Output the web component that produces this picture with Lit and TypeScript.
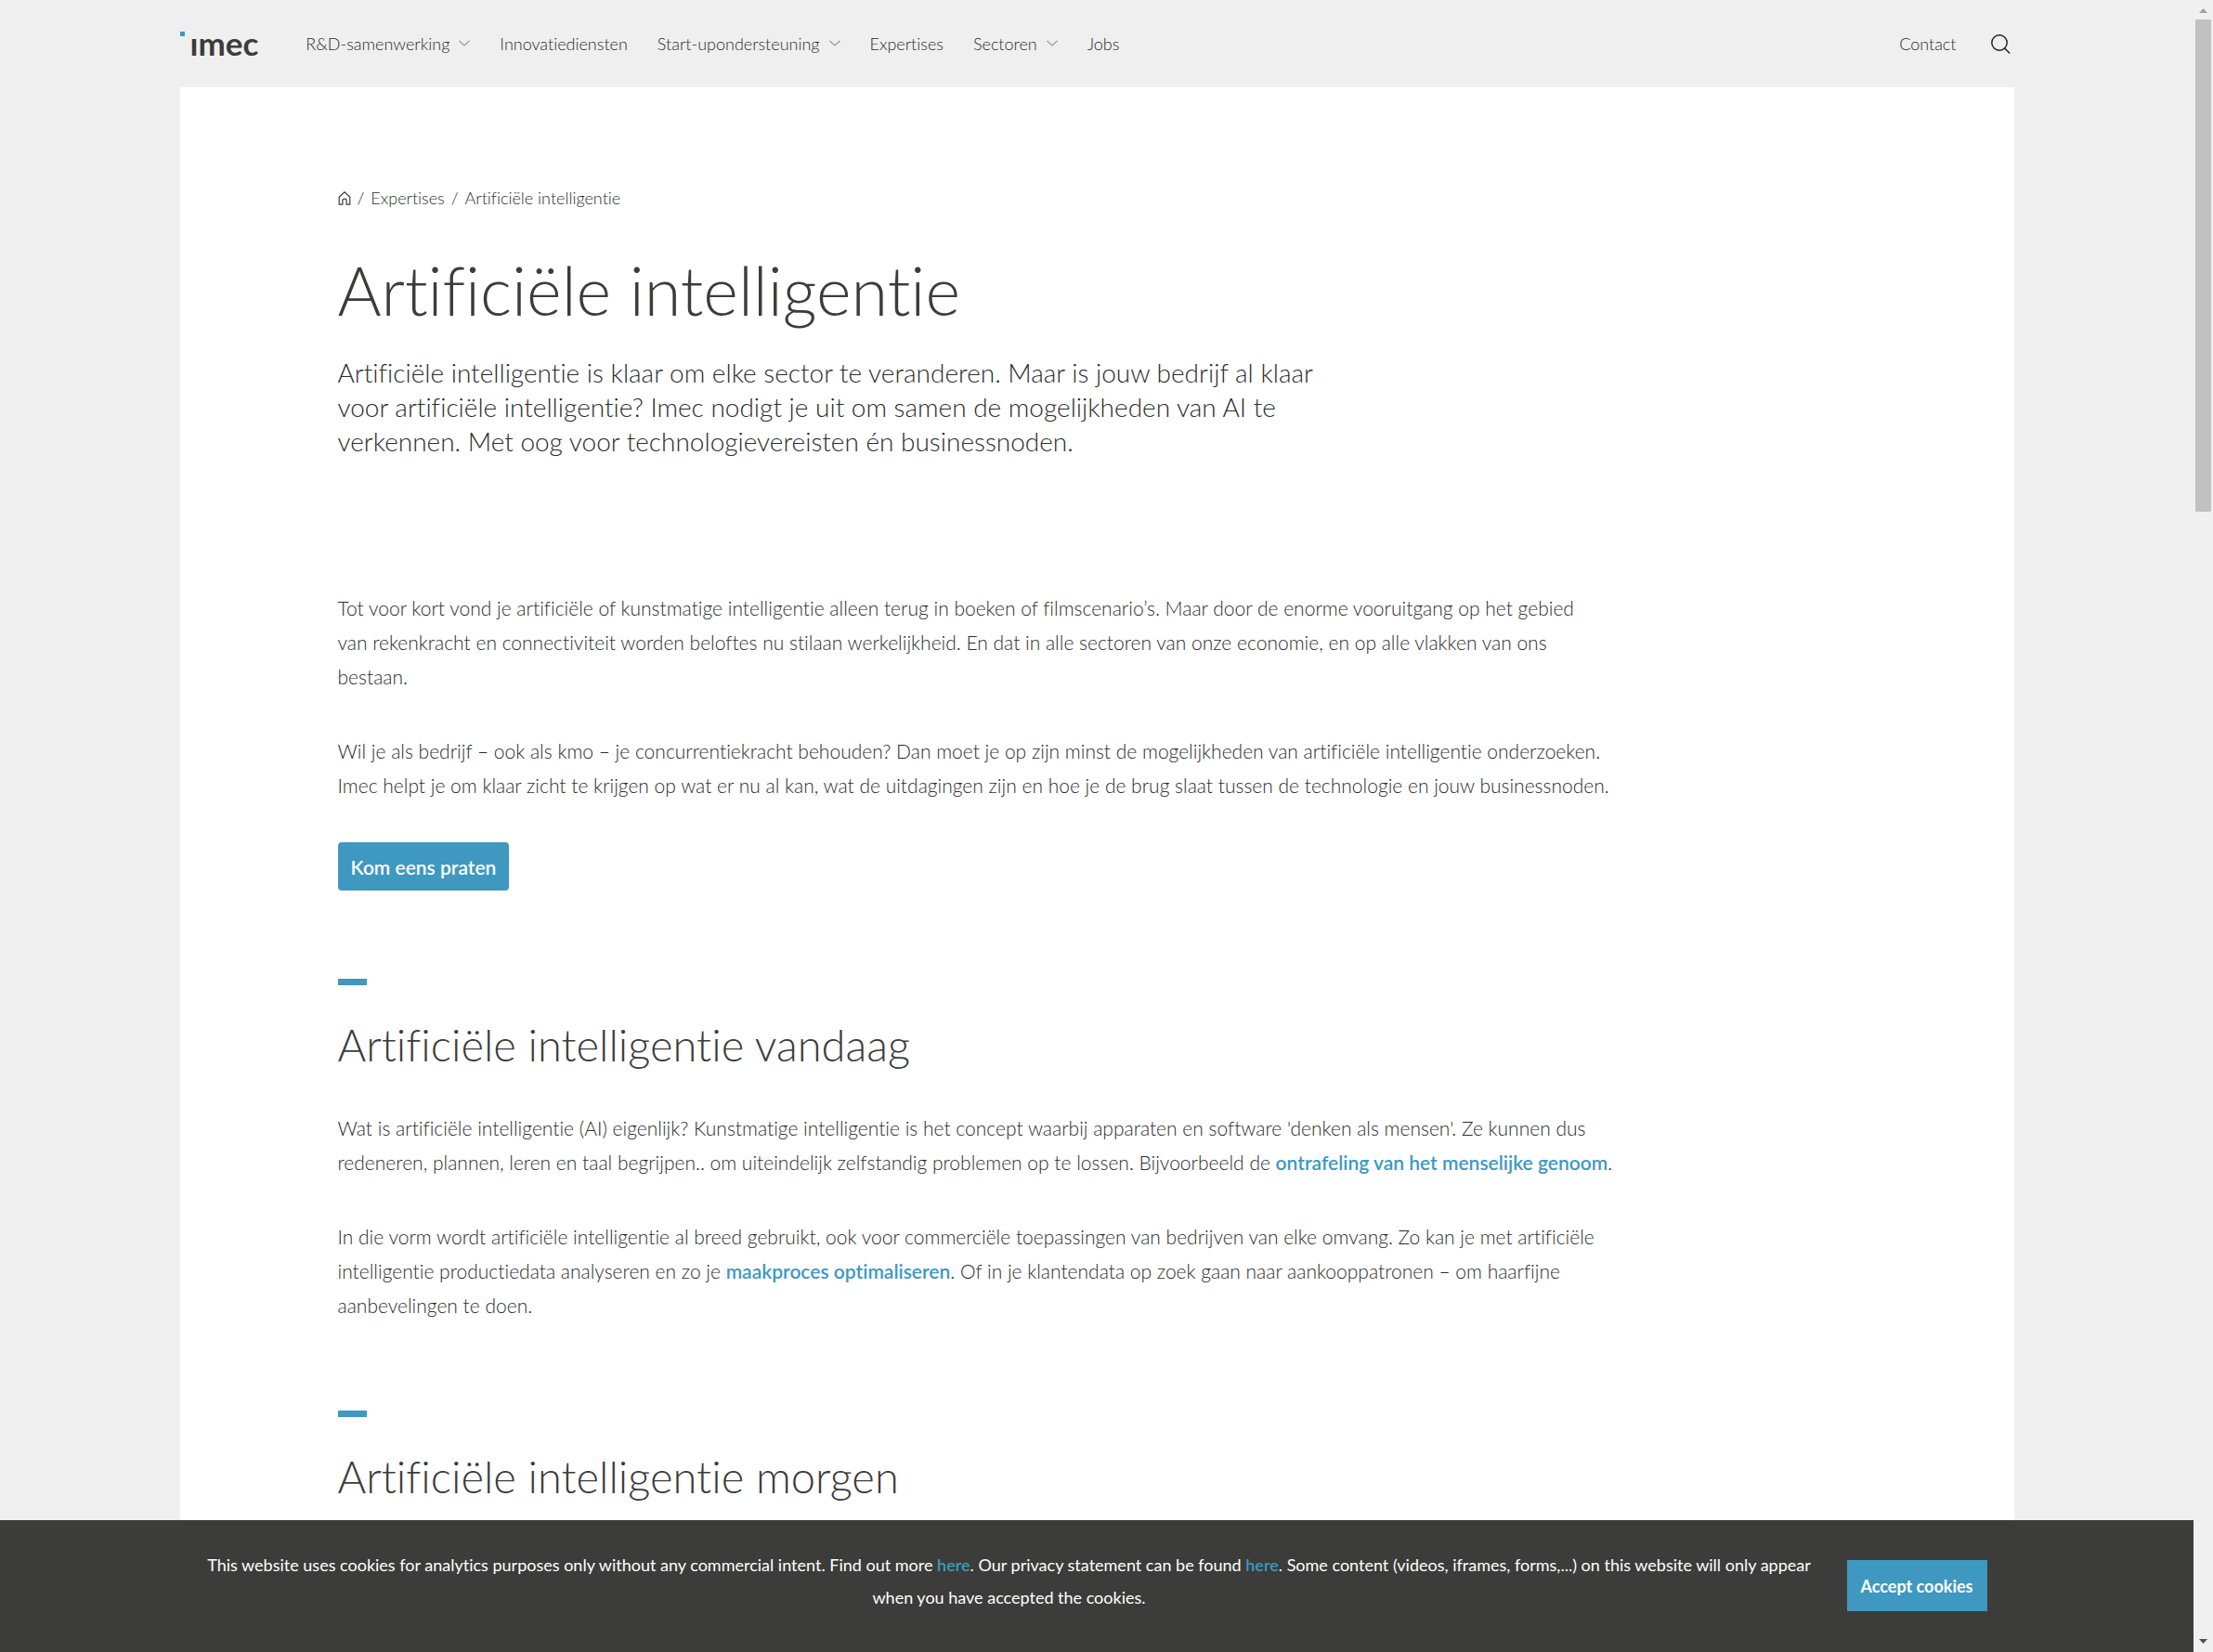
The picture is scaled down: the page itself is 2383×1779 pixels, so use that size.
import { LitElement, html, svg, css, nothing } from "lit";
import { customElement } from "lit/decorators.js";

interface NavItem {
  label: string;
  menu: boolean;
}

const NAV: NavItem[] = [
  { label: "R&D-samenwerking", menu: true },
  { label: "Innovatiediensten", menu: false },
  { label: "Start-upondersteuning", menu: true },
  { label: "Expertises", menu: false },
  { label: "Sectoren", menu: true },
  { label: "Jobs", menu: false },
];

const chevron = html`<svg class="chevron" width="12" height="8" viewBox="0 0 12 8" aria-hidden="true">
  ${svg`<path d="M0.5 1 L6 6 L11.5 1" fill="none" stroke="#9a9a9a" stroke-width="1.2" />`}
</svg>`;

@customElement("site-header")
export class SiteHeader extends LitElement {
  static styles = css`
    :host {
      display: block;
    }
    .bar {
      display: flex;
      align-items: center;
      box-sizing: border-box;
      height: 94px;
      max-width: 1975px;
      margin: 0 auto;
    }
    .logo {
      position: relative;
      padding: 0 51px 2px 11px;
      color: #3c3c3b;
      font-size: 35px;
      font-weight: 700;
      line-height: 44px;
    }
    .dot {
      position: absolute;
      left: 0;
      top: 10px;
      width: 5px;
      height: 5px;
      background: #3f98bf;
    }
    .links {
      display: flex;
      flex: 1;
      gap: 32px;
      list-style: none;
      margin: 0;
      padding: 0;
    }
    a {
      display: flex;
      align-items: center;
      gap: 10px;
      color: #2c2c2b;
      text-decoration: none;
      white-space: nowrap;
    }
    .search {
      display: flex;
      margin: 0 4px 0 37px;
      padding: 0;
      border: 0;
      background: none;
    }
  `;

  render() {
    return html`
      <header class="bar">
        <a class="logo" href="#" aria-label="imec"><span class="dot"></span>ımec</a>
        <ul class="links">
          ${NAV.map(
            (item) => html`<li><a href="#">${item.label}${item.menu ? chevron : nothing}</a></li>`
          )}
        </ul>
        <a href="#">Contact</a>
        <button class="search" type="button" aria-label="Zoeken">
          <svg width="21" height="21" viewBox="0 0 21 21" fill="none" stroke="#1d1d1b" stroke-width="1.4" aria-hidden="true">
            <circle cx="9" cy="9" r="8.2" />
            <path d="M14.2 14.6 L20.2 20.4" />
          </svg>
        </button>
      </header>
    `;
  }
}

@customElement("cookie-bar")
export class CookieBar extends LitElement {
  static styles = css`
    :host {
      display: block;
      background: #3c3c3a;
      color: #fff;
    }
    .inner {
      display: flex;
      align-items: flex-start;
      gap: 9px;
      box-sizing: border-box;
      max-width: 1975px;
      margin: 0 auto;
      padding: 31px 29px 41px 0;
    }
    .message {
      flex: 1;
      margin: 0;
      padding: 0 16px;
      font-weight: 400;
      line-height: 35px;
      text-align: center;
    }
    .message a {
      color: #3f98bf;
      font-weight: 600;
      text-decoration: none;
    }
    .accept {
      height: 55px;
      margin: 12px 0 0;
      padding: 0 15px;
      border: 0;
      background: #3f98bf;
      color: #fff;
      font: 700 18px "Lato", sans-serif;
      white-space: nowrap;
    }
  `;

  render() {
    return html`
      <div class="inner">
        <p class="message">
          This website uses cookies for analytics purposes only without any commercial intent. Find out more
          <a href="#">here</a>. Our privacy statement can be found <a href="#">here</a>. Some content (videos,
          iframes, forms,...) on this website will only appear when you have accepted the cookies.
        </p>
        <button class="accept" type="button">Accept cookies</button>
      </div>
    `;
  }
}

@customElement("scroll-rail")
export class ScrollRail extends LitElement {
  static styles = css`
    :host {
      display: flex;
      flex-direction: column;
      align-items: center;
      width: 21px;
      background: #f0f0f0;
    }
    .arrow {
      flex: none;
      display: block;
    }
    .track {
      flex: 1;
      width: 17px;
    }
    .thumb {
      height: 30.5%;
      background: #c1c1c1;
    }
  `;

  render() {
    return html`
      <svg class="arrow" width="21" height="21" viewBox="0 0 21 21" aria-hidden="true">
        <path d="M6 14 L10.5 9 L15 14 Z" fill="#a3a3a3" />
      </svg>
      <div class="track"><div class="thumb"></div></div>
      <svg class="arrow" width="21" height="21" viewBox="0 0 21 21" aria-hidden="true">
        <path d="M6 7 L10.5 12 L15 7 Z" fill="#505050" />
      </svg>
    `;
  }
}

@customElement("app-root")
export class AppRoot extends LitElement {
  static styles = css`
    :host {
      display: flex;
      height: 100vh;
      overflow: hidden;
      background: #efefef;
      color: #2c2c2b;
      font: 300 18px/26px "Lato", sans-serif;
      font-variant-ligatures: none;
    }
    .window {
      flex: 1;
      min-width: 0;
      display: flex;
      flex-direction: column;
    }
    .page {
      flex: 1;
      min-height: 0;
      overflow: hidden;
    }
    .card {
      box-sizing: border-box;
      max-width: 1975px;
      margin: 0 auto;
      padding: 106px 170px 170px;
      background: #fff;
    }
    .crumbs ol {
      display: flex;
      align-items: center;
      gap: 7px;
      list-style: none;
      margin: 0;
      padding: 0;
    }
    .crumbs li {
      display: flex;
      align-items: center;
      gap: 7px;
    }
    .crumbs a {
      color: inherit;
      text-decoration: none;
    }
    .home {
      display: flex;
    }
    h1,
    h2 {
      color: #3c3c3b;
      font-weight: 300;
    }
    h1 {
      margin: 46px 0 31px;
      font-size: 72px;
      line-height: 80px;
    }
    .intro {
      max-width: 1080px;
      margin: 0 0 142px;
      font-size: 28px;
      line-height: 37px;
    }
    .text {
      max-width: 1390px;
      font-size: 21px;
      line-height: 37px;
    }
    .text p {
      margin: 0 0 43px;
    }
    .text p a {
      color: #3f98bf;
      font-weight: 600;
      text-decoration: none;
    }
    .cta {
      display: flex;
      align-items: center;
      width: fit-content;
      height: 52px;
      padding: 0 14px;
      border-radius: 4px;
      background: #3f98bf;
      color: #fff;
      font-weight: 600;
      text-decoration: none;
    }
    section {
      margin-top: 95px;
    }
    section::before {
      content: "";
      display: block;
      width: 31px;
      height: 7px;
      background: #3f98bf;
    }
    h2 {
      margin: 36px 0 43px;
      font-size: 47px;
      line-height: 56px;
    }
  `;

  render() {
    return html`
      <div class="window">
        <div class="page">
          <site-header></site-header>
          <main class="card">
            <nav class="crumbs" aria-label="Kruimelpad">
              <ol>
                <li>
                  <a class="home" href="#" aria-label="Home">
                    <svg width="14" height="15" viewBox="0 0 13 15" fill="none" stroke="#3c3c3b" stroke-width="1.2" aria-hidden="true">
                      <path d="M0.7 6.2 L6.5 0.9 L12.3 6.2 V14.2 H8.6 V10 Q8.6 8.2 6.5 8.2 Q4.4 8.2 4.4 10 V14.2 H0.7 Z" />
                    </svg>
                  </a>
                  <span>/</span>
                </li>
                <li><a href="#">Expertises</a><span>/</span></li>
                <li>Artificiële intelligentie</li>
              </ol>
            </nav>
            <h1>Artificiële intelligentie</h1>
            <p class="intro">
              Artificiële intelligentie is klaar om elke sector te veranderen. Maar is jouw bedrijf al klaar voor
              artificiële intelligentie? Imec nodigt je uit om samen de mogelijkheden van AI te verkennen. Met oog
              voor technologievereisten én businessnoden.
            </p>
            <div class="text">
              <p>
                Tot voor kort vond je artificiële of kunstmatige intelligentie alleen terug in boeken of
                filmscenario’s. Maar door de enorme vooruitgang op het gebied<br />
                van rekenkracht en connectiviteit worden beloftes nu stilaan werkelijkheid. En dat in alle sectoren
                van onze economie, en op alle vlakken van ons<br />
                bestaan.
              </p>
              <p>
                Wil je als bedrijf – ook als kmo – je concurrentiekracht behouden? Dan moet je op zijn minst de
                mogelijkheden van artificiële intelligentie onderzoeken. Imec helpt je om klaar zicht te krijgen op
                wat er nu al kan, wat de uitdagingen zijn en hoe je de brug slaat tussen de technologie en jouw
                businessnoden.
              </p>
              <a class="cta" href="#">Kom eens praten</a>
              <section>
                <h2>Artificiële intelligentie vandaag</h2>
                <p>
                  Wat is artificiële intelligentie (AI) eigenlijk? Kunstmatige intelligentie is het concept waarbij
                  apparaten en software 'denken als mensen'. Ze kunnen dus redeneren, plannen, leren en taal
                  begrijpen.. om uiteindelijk zelfstandig problemen op te lossen. Bijvoorbeeld de
                  <a href="#">ontrafeling van het menselijke genoom</a>.
                </p>
                <p>
                  In die vorm wordt artificiële intelligentie al breed gebruikt, ook voor commerciële toepassingen
                  van bedrijven van elke omvang. Zo kan je met artificiële intelligentie productiedata analyseren en
                  zo je <a href="#">maakproces optimaliseren</a>. Of in je klantendata op zoek gaan naar
                  aankooppatronen – om haarfijne aanbevelingen te doen.
                </p>
              </section>
              <section>
                <h2>Artificiële intelligentie morgen</h2>
              </section>
            </div>
          </main>
        </div>
        <cookie-bar></cookie-bar>
      </div>
      <scroll-rail aria-hidden="true"></scroll-rail>
    `;
  }
}
